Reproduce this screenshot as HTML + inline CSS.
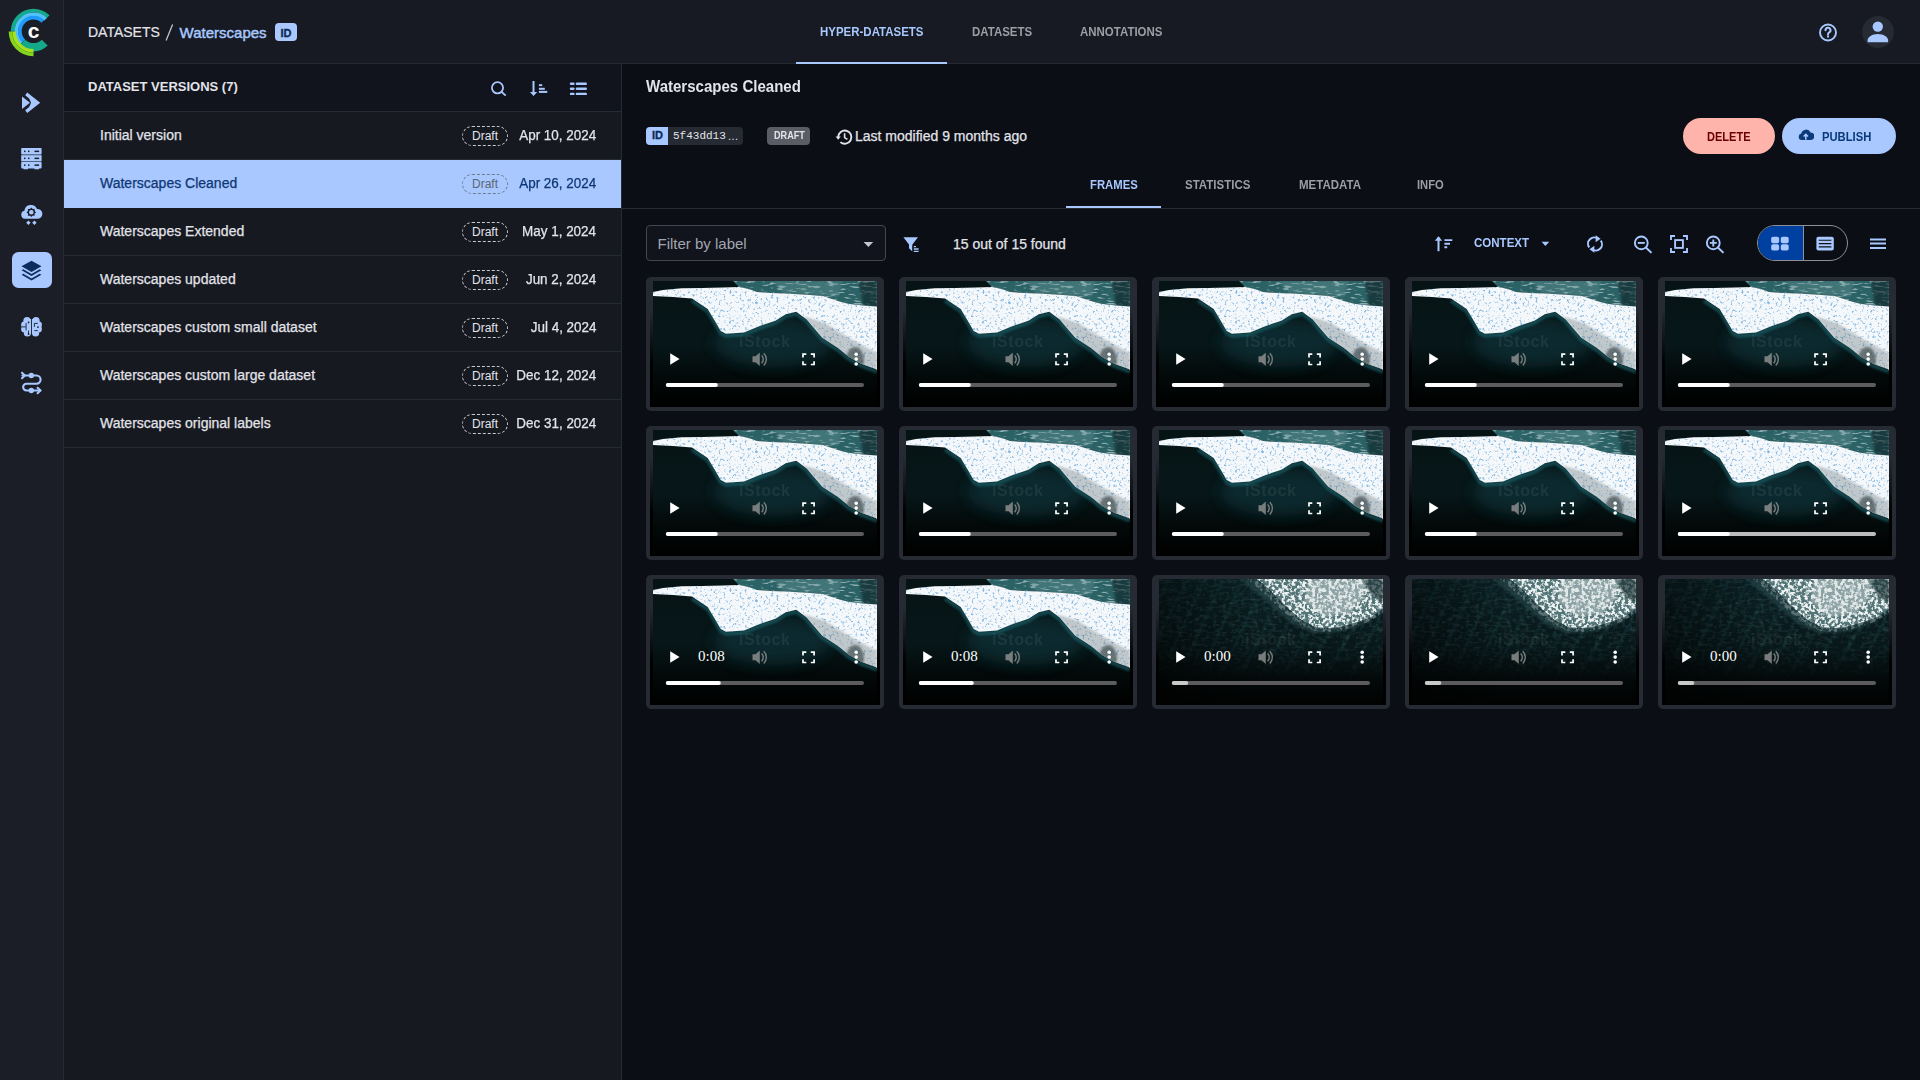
<!DOCTYPE html>
<html><head><meta charset="utf-8">
<style>
*{box-sizing:border-box;margin:0;padding:0}
html,body{width:1920px;height:1080px;overflow:hidden;background:#0b0e15;font-family:"Liberation Sans",sans-serif;color:#e3e3ea}
.a{position:absolute}
.t{position:absolute;white-space:nowrap;transform-origin:0 0;line-height:1}
#side{left:0;top:0;width:64px;height:1080px;background:#1b1e26;border-right:1px solid #262a33}
#hdr{left:64px;top:0;width:1856px;height:64px;background:#171a22;border-bottom:1px solid #262a33}
#panel{left:64px;top:64px;width:558px;height:1016px;background:#161920;border-right:1px solid #262a33}
#phead{left:0;top:0;width:557px;height:48px;background:#11141c;border-bottom:1px solid #262a33}
.row{position:absolute;left:0;width:557px;height:48px;border-bottom:1px solid #262a33}
.row.sel{background:#a8c8ff;border-bottom-color:#a8c8ff}
.rname{position:absolute;left:36px;top:16px;font-size:14px;color:#e3e3ea;white-space:nowrap;line-height:1;-webkit-text-stroke:.25px currentColor}
.sel .rname{color:#0f3674}
.chip{position:absolute;left:398px;top:14px;width:46px;height:20px;border:1px dashed #c9cbd2;border-radius:10px;font-size:12px;line-height:18px;text-align:center;color:#e3e3ea}
.sel .chip{border-color:#6f7a8c;color:#5d6676}
.date{position:absolute;right:25px;top:16px;font-size:14px;line-height:1;color:#e3e3ea;white-space:nowrap;transform:scaleX(.96);transform-origin:100% 0;-webkit-text-stroke:.25px currentColor}
.sel .date{color:#0f3674}
.card{position:absolute;width:238px;height:134px;background:#262a33;border-radius:5px}
.vid{position:absolute;left:4px;top:4px;width:230px;height:126px;background:linear-gradient(#262a33 0%,#262a33 22%,#000 66%);overflow:hidden}
.vid svg.img{position:absolute;left:3px;top:0}
</style></head><body>
<svg width="0" height="0" style="position:absolute">
 <defs>
  <filter id="bl1" x="-20%" y="-20%" width="140%" height="140%"><feGaussianBlur stdDeviation="1.2"/></filter>
  <filter id="bl05" x="-5%" y="-5%" width="110%" height="110%"><feGaussianBlur stdDeviation=".7"/></filter>
  <filter id="bl3" x="-50%" y="-50%" width="200%" height="200%"><feGaussianBlur stdDeviation="7"/></filter>
  <filter id="speck" x="0" y="0" width="100%" height="100%">
    <feTurbulence type="fractalNoise" baseFrequency="0.38" numOctaves="2" seed="7"/>
    <feColorMatrix values="0 0 0 0 0.23  0 0 0 0 0.47  0 0 0 0 0.75  5 0 0 0 -2.85"/>
  </filter>
  <filter id="speckW" x="0" y="0" width="100%" height="100%">
    <feTurbulence type="fractalNoise" baseFrequency="0.12 0.4" numOctaves="2" seed="11"/>
    <feColorMatrix values="0 0 0 0 0.85  0 0 0 0 0.92  0 0 0 0 0.92  6 0 0 0 -3.2"/>
  </filter>
  <filter id="speckW2" x="0" y="0" width="100%" height="100%">
    <feTurbulence type="fractalNoise" baseFrequency="0.3" numOctaves="2" seed="3"/>
    <feColorMatrix values="0 0 0 0 0.84  0 0 0 0 0.89  0 0 0 0 0.89  6 0 0 0 -2.6"/>
  </filter>
  <filter id="speckD" x="0" y="0" width="100%" height="100%">
    <feTurbulence type="fractalNoise" baseFrequency="0.22" numOctaves="3" seed="5"/>
    <feColorMatrix values="0 0 0 0 0.04  0 0 0 0 0.16  0 0 0 0 0.18  6 0 0 0 -3.1"/>
  </filter>
  <linearGradient id="gA" x1="0" y1="0" x2="0" y2="1">
    <stop offset="0" stop-color="#061314"/><stop offset=".5" stop-color="#071719"/><stop offset=".76" stop-color="#030909"/><stop offset="1" stop-color="#000"/>
  </linearGradient>
  <linearGradient id="gFace" x1="0" y1="0" x2="0" y2="1">
    <stop offset="0" stop-color="#1a5a66"/><stop offset=".35" stop-color="#0d3138"/><stop offset=".8" stop-color="#061719"/><stop offset="1" stop-color="#020606"/>
  </linearGradient>
  <linearGradient id="gB" x1="0" y1="0" x2="0" y2="1">
    <stop offset="0" stop-color="#0b2226"/><stop offset=".55" stop-color="#081719"/><stop offset=".82" stop-color="#030808"/><stop offset="1" stop-color="#010202"/>
  </linearGradient>
  <linearGradient id="fadeG" x1="0" y1="0" x2="0" y2="1"><stop offset="0" stop-color="#fff"/><stop offset=".45" stop-color="#fff"/><stop offset=".8" stop-color="#000"/></linearGradient>
  <linearGradient id="fadeL" x1="0" y1="0" x2="1" y2="0"><stop offset="0" stop-color="#000" stop-opacity=".5"/><stop offset=".45" stop-color="#000" stop-opacity="0"/></linearGradient>
  <mask id="fadeM" maskUnits="userSpaceOnUse" x="0" y="0" width="224" height="126"><rect width="224" height="126" fill="url(#fadeG)"/></mask>
  <clipPath id="bandB"><path d="M88 0 H224 V34 L212 42 L198 47 L184 51 L170 53 L156 52 L140 45 L127 35 L112 21 L100 10 Z"/></clipPath>
  <clipPath id="foamClip"><path d="M0 11 L10 9 L28.7 7.2 L50 7 L70 6.5 L86 6 L96 8 L104 11 L118 12 L133 12.4 L153.7 13.7 L170 15 L185 20 L195 22.8 L210 24.5 L224 25.5 L224 89 L222.7 88 L208 82.75 L196 76 L185 67 L169.3 56.7 L160 46 L153.7 38.5 L143.3 30.7 L132.8 33.3 L122.4 39.8 L106.8 45 L91 51.5 L73 52.8 L67.7 50 L62.5 41 L54.7 28 L39 17.6 L20 16 L0 15 Z"/></clipPath>
  <clipPath id="sprayClip"><path d="M80 0 H224 V25.5 L224 25.5 L210 24.5 L195 22.8 L185 20 L170 15 L153.7 13.7 L133 12.4 L118 12 L104 11 L96 8 L86 6 Z"/></clipPath>
  <clipPath id="brightB"><path d="M98 0 H224 V30 L212 38 L198 43 L184 47 L170 49 L156 48 L143 41 L131 31 L118 18 L108 8 Z"/></clipPath>
  <symbol id="imgA" viewBox="0 0 224 126">
    <rect width="224" height="126" fill="url(#gA)"/>
    <ellipse cx="120" cy="62" rx="58" ry="24" fill="#0f3237" opacity=".7" filter="url(#bl3)"/>
    <g clip-path="url(#sprayClip)">
      <rect width="224" height="30" fill="#2b6266"/>
      <rect width="224" height="30" filter="url(#speckW)" opacity=".5"/>
      <path d="M206 0 H224 V28 L210 24 Z" fill="#0c2426" opacity=".6" filter="url(#bl1)"/><path d="M120 0 H190 L185 16 L130 12Z" fill="#6a9a9c" opacity=".35" filter="url(#bl1)"/>
    </g>
    <path d="M224 91 L222.7 90 L208 84.75 L196 78 L185 69 L169.3 58.7 L160 48 L153.7 40.5 L143.3 32.7 L132.8 35.3 L122.4 41.8 L106.8 47 L91 53.5 L73 54.8 L67.7 52 L62.5 43 L54.7 30 L39 19.6" fill="none" stroke="#1f6670" stroke-width="4" opacity=".6" filter="url(#bl1)"/>
    <g clip-path="url(#foamClip)">
      <rect width="224" height="100" fill="#f5f8fa"/>
      <rect width="224" height="100" filter="url(#speck)"/>
      <path d="M150 35 L172 60 L200 82 L224 89 L224 72 L198 58 L172 42Z" fill="#55656b" opacity=".32" filter="url(#bl1)"/>
      <ellipse cx="202" cy="79" rx="9" ry="13" fill="#2e3a3e" opacity=".6" filter="url(#bl1)"/>
    </g>
        <text x="86" y="66" font-family="Liberation Sans" font-weight="700" font-size="16" fill="#8a9a9a" opacity=".13" textLength="51">iStock</text>
  </symbol>
  <symbol id="imgB" viewBox="0 0 224 126">
    <rect width="224" height="126" fill="url(#gB)"/>
    <g mask="url(#fadeM)">
    <g stroke="#1d4a50" stroke-width="2.2" opacity=".4" filter="url(#bl1)">
      <path d="M10 0 L-20 60 M28 0 L-6 70 M46 0 L10 78 M64 0 L26 84 M82 4 L44 90 M98 20 L62 96 M112 36 L80 100 M128 48 L98 104 M150 54 L118 106 M172 50 L138 108 M196 46 L160 110 M220 40 L184 112"/>
    </g>
    <rect width="224" height="100" filter="url(#speckD)" opacity=".2"/>
    <rect width="224" height="100" filter="url(#speckW)" opacity=".06"/>
    </g>
    <path d="M80 0 H224 V32 L203.7 46 L179 53 L154 54 L135 46 L118 32 L98 14 Z" fill="#2f5154" opacity=".5" filter="url(#bl1)"/>
    <g clip-path="url(#bandB)"><rect width="224" height="60" filter="url(#speckW2)" opacity=".3"/></g>
    <g filter="url(#bl05)">
    <g clip-path="url(#brightB)">
      <rect width="224" height="60" fill="#537477"/>
      <rect width="224" height="60" filter="url(#speckW2)"/>
      <path d="M150 0 H208 L204 20 L190 34 L165 38 L145 22 Z" fill="#d5dcdc" opacity=".45" filter="url(#bl1)"/>
      <path d="M204 0 H224 V24 L212 16Z" fill="#1c3234" opacity=".7" filter="url(#bl1)"/>
    </g>
    </g>
    <rect width="224" height="126" fill="url(#fadeL)"/>
    <text x="86" y="66" font-family="Liberation Sans" font-weight="700" font-size="16" fill="#8a9a9a" opacity=".1" textLength="51">iStock</text>
  </symbol>
 </defs>
</svg>

<!-- sidebar -->
<div id="side" class="a">
  <svg class="a" style="left:0;top:0" width="64" height="64" viewBox="0 0 64 64">
    <path d="M22.26 42.64A15.9 15.9 0 0 0 44.74 42.64" fill="none" stroke="#15a98b" stroke-width="8.4"/>
    <path d="M48.21 16.69A20.8 20.8 0 0 0 12.70 31.40" fill="none" stroke="#15a98b" stroke-width="3.8"/>
    <path d="M45.66 19.24A17.2 17.2 0 0 0 21.13 43.35" fill="none" stroke="#52c2f8" stroke-width="3.8"/>
    <path d="M42.78 21.45A13.6 13.6 0 0 0 23.72 40.85" fill="none" stroke="#1f9bfb" stroke-width="3.8"/>
    <path d="M14.00 31.40A19.5 19.5 0 0 0 33.50 50.90" fill="none" stroke="#a6e01e" stroke-width="3.6"/>
    <path d="M10.50 31.40A23.0 23.0 0 0 0 33.50 54.40" fill="none" stroke="#84d61c" stroke-width="3.6"/>
    <text x="33.6" y="38" text-anchor="middle" font-family="Liberation Sans" font-weight="700" font-size="21" fill="#fff">c</text>
  </svg>
  <svg class="a" style="left:0;top:80px" width="64" height="330" viewBox="0 80 64 330">
    <g fill="#a8c8ff">
      <path d="M22 96.5 L30 102.8 L22 109 Z"/>
      <path d="M27.2 92.5 L40.2 102.8 L27.2 113 L25.2 110.2 L34.4 102.8 L25.2 95.3 Z"/>
      <path d="M28 95.5 L36 102.8 L28 110 L31 102.8 Z"/>
    </g>
    <g>
      <rect x="21.2" y="148" width="20.4" height="6.6" rx="0.8" fill="#a8c8ff"/>
      <rect x="21.2" y="155.2" width="20.4" height="6.2" fill="#a8c8ff"/>
      <rect x="21.2" y="162" width="20.4" height="6.4" rx="0.8" fill="#a8c8ff"/>
      <rect x="23.5" y="168" width="4.5" height="1.3" fill="#a8c8ff"/>
      <rect x="34.5" y="168" width="4.5" height="1.3" fill="#a8c8ff"/>
      <g fill="#1b1e26">
        <rect x="24" y="150.6" width="1.5" height="1.5"/><rect x="28" y="150.6" width="1.5" height="1.5"/><rect x="34.5" y="150.6" width="4.6" height="1.5"/>
        <rect x="24" y="157.6" width="1.5" height="1.5"/><rect x="28" y="157.6" width="1.5" height="1.5"/><rect x="34.5" y="157.6" width="4.6" height="1.5"/>
        <rect x="24" y="164.4" width="1.5" height="1.5"/><rect x="28" y="164.4" width="1.5" height="1.5"/><rect x="34.5" y="164.4" width="4.6" height="1.5"/>
      </g>
    </g>
    <g>
      <path d="M25 218.7 a4 4 0 0 1 -0.6 -7.9 a6.6 6.6 0 0 1 12.6 -1.8 a4.6 4.6 0 0 1 1 9.7 Z" fill="#a8c8ff"/>
      <circle cx="31.3" cy="212.3" r="3" fill="none" stroke="#1b1e26" stroke-width="1.4"/>
      <path d="M31.3 207.8v1.6M31.3 215.2v1.6M26.8 212.3h1.6M34.2 212.3h1.6M28.1 209.1l1.1 1.1M33.4 214.4l1.1 1.1M28.1 215.5l1.1-1.1M33.4 210.2l1.1-1.1" stroke="#1b1e26" stroke-width="1.2"/>
      <path d="M26.2 222.8 l2.2-2.2 l2.2 2.2 l-2.2 2.2z M32.2 222.8 l2.2-2.2 l2.2 2.2 l-2.2 2.2z" fill="#a8c8ff"/>
    </g>
    <rect x="12" y="252" width="40" height="36" rx="6.5" fill="#a8c8ff"/>
    <g fill="#0a2d5c">
      <path d="M31.5 260.7 L41.5 266.3 L31.5 271.9 L21.5 266.3 Z"/>
      <path d="M23.3 269.3 L21.6 270.3 L31.5 276.1 L41.4 270.3 L39.7 269.3 L31.5 273.9 Z"/>
      <path d="M23.3 273.7 L21.6 274.7 L31.5 280.6 L41.4 274.7 L39.7 273.7 L31.5 278.4 Z"/>
    </g>
    <g>
      <g fill="#a8c8ff">
        <circle cx="27" cy="320.6" r="3.6"/><circle cx="36" cy="320.6" r="3.6"/>
        <circle cx="24.6" cy="324.8" r="3.5"/><circle cx="38.4" cy="324.8" r="3.5"/>
        <circle cx="24.6" cy="329" r="3.5"/><circle cx="38.4" cy="329" r="3.5"/>
        <circle cx="27.4" cy="333" r="3.6"/><circle cx="35.6" cy="333" r="3.6"/>
        <rect x="26" y="319" width="11" height="15"/>
      </g>
      <path d="M31.5 317.5v19 M21.5 326.9h4.2 M26.1 323v7.4 M37.8 323.4h-3.4v3.4 M34.4 330.6h3.4 M28.5 330.6v3" fill="none" stroke="#1b1e26" stroke-width=".9"/>
      <g fill="#1b1e26"><circle cx="28.6" cy="322.4" r=".9"/><circle cx="38" cy="327.1" r=".9"/><circle cx="28.6" cy="334" r=".9"/></g>
    </g>
    <g fill="none" stroke="#a8c8ff" stroke-width="2.1" stroke-linecap="round">
      <path d="M22.5 375.5 H36.5 a4.1 4.1 0 0 1 0 8.2 H26.5 a3.4 3.4 0 0 0 0 6.8 H40.2"/>
      <path d="M22 372.8 l2.8 2.7 l-2.8 2.7 M37.6 387.8 l2.8 2.7 l-2.8 2.7"/>
    </g>
    <g fill="#a8c8ff"><circle cx="31.3" cy="375.5" r="2.7"/><circle cx="31.3" cy="390.5" r="2.7"/></g>
  </svg>
</div>

<!-- header -->
<div id="hdr" class="a">
  <div class="t" style="left:24px;top:25.4px;font-size:14px;color:#e3e3ea;-webkit-text-stroke:.2px #e3e3ea">DATASETS</div>
  <svg class="a" style="left:100px;top:20px" width="14" height="24" viewBox="164 20 14 24"><path d="M172.6 24.6L166.1 40.4" stroke="#c4c6cf" stroke-width="1.25"/></svg>
  <div class="t" style="left:115.6px;top:24.5px;font-size:15px;color:#a8c8ff;-webkit-text-stroke:.45px #a8c8ff">Waterscapes</div>
  <div class="a" style="left:211px;top:23px;width:22px;height:18px;background:#a8c8ff;border-radius:4px"></div>
  <div class="t" style="left:216.5px;top:27.5px;font-size:11px;font-weight:700;color:#0b2a55;-webkit-text-stroke:.3px #0b2a55">ID</div>
  <div class="t" style="left:756px;top:24.8px;font-size:13.5px;font-weight:700;color:#a8c8ff;transform:scaleX(.85)">HYPER-DATASETS</div>
  <div class="t" style="left:907.7px;top:24.8px;font-size:13.5px;font-weight:700;color:#9c9ea6;transform:scaleX(.85)">DATASETS</div>
  <div class="t" style="left:1016.2px;top:24.8px;font-size:13.5px;font-weight:700;color:#9c9ea6;transform:scaleX(.85)">ANNOTATIONS</div>
  <div class="a" style="left:732px;top:62px;width:151px;height:2px;background:#a8c8ff"></div>
  <svg class="a" style="left:1754px;top:22px" width="21" height="21" viewBox="0 0 21 21">
    <circle cx="10" cy="10.5" r="8" fill="none" stroke="#a8c8ff" stroke-width="1.9"/>
    <path d="M7.5 8.3a2.5 2.5 0 1 1 3.7 2.1c-.7.4-1.2.9-1.2 1.8v.4" fill="none" stroke="#a8c8ff" stroke-width="2" stroke-linecap="round"/>
    <rect x="9" y="13.5" width="2" height="2" fill="#a8c8ff"/>
  </svg>
  <div class="a" style="left:1798px;top:16px;width:32px;height:32px;border-radius:50%;background:#262a33"></div>
  <svg class="a" style="left:1798px;top:16px" width="32" height="32" viewBox="0 0 32 32">
    <circle cx="15.8" cy="10.6" r="5.2" fill="#a8c8ff"/>
    <path d="M5.6 26.3v-2.2c0-3.2 4.6-6.2 10.2-6.2s10.3 3 10.3 6.2v2.2z" fill="#a8c8ff"/>
  </svg>
</div>

<!-- left panel -->
<div id="panel" class="a">
  <div id="phead" class="a">
    <div class="t" style="left:24px;top:16.2px;font-size:13px;font-weight:700;color:#e3e3ea">DATASET VERSIONS (7)</div>
    <svg class="a" style="left:422px;top:12px" width="130" height="24" viewBox="486 76 130 24">
      <circle cx="497.5" cy="87.8" r="5.6" fill="none" stroke="#a8c8ff" stroke-width="1.8"/>
      <path d="M501.6 91.9l4.1 3.7" stroke="#a8c8ff" stroke-width="1.9"/>
      <path d="M533.5 81v11" stroke="#a8c8ff" stroke-width="2"/>
      <path d="M529.9 92.1h7.3l-3.65 4z" fill="#a8c8ff"/>
      <rect x="538.9" y="84.2" width="3.3" height="1.9" fill="#a8c8ff"/>
      <rect x="538.9" y="87.8" width="5.9" height="2" fill="#a8c8ff"/>
      <rect x="538.9" y="90.9" width="8.4" height="2" fill="#a8c8ff"/>
      <g fill="#a8c8ff"><rect x="569.8" y="82.6" width="4.8" height="2.4" rx="1.2"/><rect x="575.7" y="82.6" width="11.3" height="2.4" rx="1.2"/><rect x="569.8" y="87.6" width="4.8" height="2.4" rx="1.2"/><rect x="575.7" y="87.6" width="11.3" height="2.4" rx="1.2"/><rect x="569.8" y="92.7" width="4.8" height="2.4" rx="1.2"/><rect x="575.7" y="92.7" width="11.3" height="2.4" rx="1.2"/></g>
    </svg>
  </div>
  <div class="row" style="top:48px"><div class="rname">Initial version</div><div class="chip">Draft</div><div class="date">Apr 10, 2024</div></div>
  <div class="row sel" style="top:96px"><div class="rname">Waterscapes Cleaned</div><div class="chip">Draft</div><div class="date">Apr 26, 2024</div></div>
  <div class="row" style="top:144px"><div class="rname">Waterscapes Extended</div><div class="chip">Draft</div><div class="date">May 1, 2024</div></div>
  <div class="row" style="top:192px"><div class="rname">Waterscapes updated</div><div class="chip">Draft</div><div class="date">Jun 2, 2024</div></div>
  <div class="row" style="top:240px"><div class="rname">Waterscapes custom small dataset</div><div class="chip">Draft</div><div class="date">Jul 4, 2024</div></div>
  <div class="row" style="top:288px"><div class="rname">Waterscapes custom large dataset</div><div class="chip">Draft</div><div class="date">Dec 12, 2024</div></div>
  <div class="row" style="top:336px"><div class="rname">Waterscapes original labels</div><div class="chip">Draft</div><div class="date">Dec 31, 2024</div></div>
</div>

<!-- main -->
<div id="main" class="a" style="left:0;top:0;width:1920px;height:1080px">
  <div class="t" style="left:646px;top:79.3px;font-size:16px;font-weight:700;color:#e3e3ea;transform:scaleX(.94)">Waterscapes Cleaned</div>
  <!-- id chip -->
  <div class="a" style="left:646px;top:127px;width:97px;height:18px;background:#262a33;border-radius:4px;overflow:hidden"><div class="a" style="left:0;top:0;width:22px;height:18px;background:#a8c8ff"></div></div>
  <div class="t" style="left:652px;top:130.4px;font-size:11px;font-weight:700;color:#0b2a55;-webkit-text-stroke:.3px #0b2a55">ID</div>
  <div class="t" style="left:673px;top:131.4px;font-size:11px;font-family:'Liberation Mono',monospace;color:#e3e3ea">5f43dd13</div>
  <div class="t" style="left:727.5px;top:130.5px;font-size:11px;color:#e3e3ea">&hellip;</div>
  <!-- draft chip -->
  <div class="a" style="left:767px;top:127px;width:43px;height:18px;background:#5a5d66;border-radius:4px"></div>
  <div class="t" style="left:773.5px;top:129.7px;font-size:11px;font-weight:700;color:#e3e3ea;transform:scaleX(.83)">DRAFT</div>
  <!-- history -->
  <svg class="a" style="left:834px;top:128px" width="20" height="18" viewBox="0 0 20 18">
    <path d="M4.2 9.2 A6.6 6.6 0 1 1 6.4 14.1" fill="none" stroke="#e3e3ea" stroke-width="1.9"/>
    <path d="M1.6 8.6 h5.2 l-2.6 3.2z" fill="#e3e3ea"/>
    <path d="M10.6 5.2 v4.4 l2.8 1.8" fill="none" stroke="#e3e3ea" stroke-width="1.6"/>
  </svg>
  <div class="t" style="left:855px;top:128.95px;font-size:14px;color:#e3e3ea;-webkit-text-stroke:.25px #e3e3ea">Last modified 9 months ago</div>
  <!-- buttons -->
  <div class="a" style="left:1683px;top:118px;width:92px;height:36px;background:#ffb4ab;border-radius:18px"></div>
  <div class="t" style="left:1707px;top:129.6px;font-size:13px;font-weight:700;color:#690005;transform:scaleX(.85)">DELETE</div>
  <div class="a" style="left:1782px;top:118px;width:114px;height:36px;background:#a8c8ff;border-radius:18px"></div>
  <svg class="a" style="left:1798px;top:129px" width="16" height="12" viewBox="0 0 16 12">
    <path d="M3.6 11 a3.3 3.3 0 0 1 -0.3 -6.5 a4.9 4.9 0 0 1 9.2 -1.1 a3.8 3.8 0 0 1 0 7.6 Z" fill="#0a3a7a"/>
    <path d="M7.8 10.8 v-4.2 M5.6 7.6 l2.2 -2.3 l2.2 2.3" fill="none" stroke="#a8c8ff" stroke-width="1.5"/>
  </svg>
  <div class="t" style="left:1821.5px;top:129.6px;font-size:13px;font-weight:700;color:#0a3a7a;transform:scaleX(.865)">PUBLISH</div>
  <!-- tabs -->
  <div class="t" style="left:1090px;top:178.2px;font-size:13.5px;font-weight:700;color:#a8c8ff;transform:scaleX(0.838)">FRAMES</div>
  <div class="t" style="left:1185.4px;top:178.2px;font-size:13.5px;font-weight:700;color:#9c9ea6;transform:scaleX(0.852)">STATISTICS</div>
  <div class="t" style="left:1299px;top:178.2px;font-size:13.5px;font-weight:700;color:#9c9ea6;transform:scaleX(0.852)">METADATA</div>
  <div class="t" style="left:1416.7px;top:178.2px;font-size:13.5px;font-weight:700;color:#9c9ea6;transform:scaleX(0.828)">INFO</div>
  <div class="a" style="left:622px;top:208px;width:1298px;height:1px;background:#262a33"></div>
  <div class="a" style="left:1066px;top:206px;width:95px;height:2px;background:#a8c8ff"></div>
  <!-- toolbar -->
  <div class="a" style="left:646px;top:225px;width:240px;height:36px;background:#11141c;border:1px solid #44474f;border-radius:4px"></div>
  <div class="t" style="left:657.5px;top:235.8px;font-size:15px;color:#a3a6ae">Filter by label</div>
  <svg class="a" style="left:862px;top:241px" width="13" height="7" viewBox="0 0 13 7"><path d="M1.6 .9h9.6l-4.8 5z" fill="#c4c6cf"/></svg>
  <svg class="a" style="left:902px;top:236px" width="19" height="17" viewBox="0 0 19 17">
    <path d="M1.4 1.2h14.6l-5.6 7.2v7.2l-3.4-3.4v-3.8z" fill="#a8c8ff"/>
    <path d="M11.6 10.6h2.4M11.6 13h5M11.6 15.4h5" stroke="#a8c8ff" stroke-width="1.3"/>
    <path d="M10.5 9.4h1v7h-1z" fill="#0c0f16"/>
  </svg>
  <div class="t" style="left:953px;top:236.95px;font-size:14px;color:#e3e3ea;-webkit-text-stroke:.25px #e3e3ea">15 out of 15 found</div>
  <svg class="a" style="left:1432px;top:234px" width="24" height="20" viewBox="0 0 24 20">
    <path d="M6.5 17.2V3.4" stroke="#a8c8ff" stroke-width="2"/>
    <path d="M2.8 6.8 L6.5 2.2 L10.2 6.8z" fill="#a8c8ff"/>
    <path d="M12.4 6.1h7.9M12.4 9.7h5.6M12.4 13.2h2.8" stroke="#a8c8ff" stroke-width="1.9"/>
  </svg>
  <div class="t" style="left:1473.7px;top:236.8px;font-size:12px;font-weight:700;color:#a8c8ff;transform:scaleX(.96)">CONTEXT</div>
  <svg class="a" style="left:1540px;top:241px" width="11" height="6" viewBox="0 0 11 6"><path d="M1.6 .7h7.6l-3.8 4.3z" fill="#a8c8ff"/></svg>
  <svg class="a" style="left:1585px;top:233px" width="20" height="22" viewBox="0 0 20 22">
    <path d="M4.2 14.4 A6.2 6.2 0 0 1 13.2 6" fill="none" stroke="#a8c8ff" stroke-width="2"/>
    <path d="M15.8 7.6 A6.2 6.2 0 0 1 6.8 16" fill="none" stroke="#a8c8ff" stroke-width="2"/>
    <path d="M10.6 2.2 L15.6 5.8 L10.6 9.2z" fill="#a8c8ff"/>
    <path d="M9.4 12.8 L4.4 16.2 L9.4 19.8z" fill="#a8c8ff"/>
  </svg>
  <svg class="a" style="left:1632px;top:234px" width="22" height="20" viewBox="0 0 22 20">
    <circle cx="9.3" cy="8.9" r="6.4" fill="none" stroke="#a8c8ff" stroke-width="1.9"/>
    <path d="M13.9 13.5l5.6 5.4" stroke="#a8c8ff" stroke-width="2"/>
    <path d="M5.8 8.9h7" stroke="#a8c8ff" stroke-width="1.9"/>
  </svg>
  <svg class="a" style="left:1669px;top:234px" width="20" height="20" viewBox="0 0 20 20">
    <path d="M2 6V2h4M14 2h4v4M18 14v4h-4M6 18H2v-4" fill="none" stroke="#a8c8ff" stroke-width="1.9"/>
    <rect x="6.1" y="6.1" width="7.8" height="7.8" fill="none" stroke="#a8c8ff" stroke-width="1.9"/>
  </svg>
  <svg class="a" style="left:1704px;top:234px" width="22" height="20" viewBox="0 0 22 20">
    <circle cx="9.3" cy="8.9" r="6.4" fill="none" stroke="#a8c8ff" stroke-width="1.9"/>
    <path d="M13.9 13.5l5.6 5.4" stroke="#a8c8ff" stroke-width="2"/>
    <path d="M5.8 8.9h7M9.3 5.4v7" stroke="#a8c8ff" stroke-width="1.9"/>
  </svg>
  <div class="a" style="left:1757px;top:225px;width:91px;height:36px;border:1px solid #8e9099;border-radius:18px;overflow:hidden">
    <div class="a" style="left:0;top:0;width:45px;height:34px;background:#0040a0"></div>
    <div class="a" style="left:45px;top:0;width:1px;height:34px;background:#8e9099"></div>
  </div>
  <svg class="a" style="left:1770px;top:236px" width="20" height="16" viewBox="0 0 20 16">
    <rect x="1.2" y=".8" width="7.9" height="6.4" rx="1.8" fill="#a8c8ff"/><rect x="10.8" y=".8" width="7.9" height="6.4" rx="1.8" fill="#a8c8ff"/>
    <rect x="1.2" y="8.2" width="7.9" height="6.4" rx="1.8" fill="#a8c8ff"/><rect x="10.8" y="8.2" width="7.9" height="6.4" rx="1.8" fill="#a8c8ff"/>
  </svg>
  <svg class="a" style="left:1815px;top:236px" width="20" height="16" viewBox="0 0 20 16">
    <rect x="1.4" y=".8" width="17.4" height="13.8" rx="2" fill="#a8c8ff"/>
    <path d="M3.8 4.3h12.6M3.8 7.6h12.6M3.8 10.9h12.6" stroke="#0c0f16" stroke-width="1.1"/>
  </svg>
  <svg class="a" style="left:1868px;top:236px" width="20" height="14" viewBox="0 0 20 14">
    <path d="M2 3.4h16M2 7.6h16M2 11.9h16" stroke="#a8c8ff" stroke-width="2"/>
  </svg>
<div class="card" style="left:646px;top:277px"><div class="vid"><svg class="img" width="224" height="126"><use href="#imgA"/></svg></div>
  <svg class="a" style="left:0;top:0" width="238" height="134" viewBox="0 0 238 134">
    <path d="M24.2 76.2 L33.6 82 L24.2 87.8Z" fill="#fff"/>
    <path d="M106.5 79.3h3l4.3-3.8v13.6l-4.3-3.8h-3z" fill="#8d8d8d" opacity=".85"/>
    <path d="M115.6 78.4a5.4 5.4 0 0 1 0 7.8M117.8 76.2a8.6 8.6 0 0 1 0 12.2" fill="none" stroke="#8d8d8d" stroke-width="1.4" opacity=".85"/>
    <path d="M157 80.4v-3.3h3.3M164.8 77.1h3.3v3.3M168.1 84.2v3.3h-3.3M160.3 87.5h-3.3v-3.3" fill="none" stroke="#fff" stroke-width="1.7"/>
    <circle cx="210.2" cy="77.2" r="1.8" fill="#fff"/><circle cx="210.2" cy="82.1" r="1.8" fill="#fff"/><circle cx="210.2" cy="87" r="1.8" fill="#fff"/>
    <rect x="19.8" y="106" width="198.2" height="4" rx="2" fill="#5c5c5c"/>
    <rect x="19.8" y="106" width="52" height="4" rx="2" fill="#fff"/>
  </svg></div>
<div class="card" style="left:899px;top:277px"><div class="vid"><svg class="img" width="224" height="126"><use href="#imgA"/></svg></div>
  <svg class="a" style="left:0;top:0" width="238" height="134" viewBox="0 0 238 134">
    <path d="M24.2 76.2 L33.6 82 L24.2 87.8Z" fill="#fff"/>
    <path d="M106.5 79.3h3l4.3-3.8v13.6l-4.3-3.8h-3z" fill="#8d8d8d" opacity=".85"/>
    <path d="M115.6 78.4a5.4 5.4 0 0 1 0 7.8M117.8 76.2a8.6 8.6 0 0 1 0 12.2" fill="none" stroke="#8d8d8d" stroke-width="1.4" opacity=".85"/>
    <path d="M157 80.4v-3.3h3.3M164.8 77.1h3.3v3.3M168.1 84.2v3.3h-3.3M160.3 87.5h-3.3v-3.3" fill="none" stroke="#fff" stroke-width="1.7"/>
    <circle cx="210.2" cy="77.2" r="1.8" fill="#fff"/><circle cx="210.2" cy="82.1" r="1.8" fill="#fff"/><circle cx="210.2" cy="87" r="1.8" fill="#fff"/>
    <rect x="19.8" y="106" width="198.2" height="4" rx="2" fill="#5c5c5c"/>
    <rect x="19.8" y="106" width="52" height="4" rx="2" fill="#fff"/>
  </svg></div>
<div class="card" style="left:1152px;top:277px"><div class="vid"><svg class="img" width="224" height="126"><use href="#imgA"/></svg></div>
  <svg class="a" style="left:0;top:0" width="238" height="134" viewBox="0 0 238 134">
    <path d="M24.2 76.2 L33.6 82 L24.2 87.8Z" fill="#fff"/>
    <path d="M106.5 79.3h3l4.3-3.8v13.6l-4.3-3.8h-3z" fill="#8d8d8d" opacity=".85"/>
    <path d="M115.6 78.4a5.4 5.4 0 0 1 0 7.8M117.8 76.2a8.6 8.6 0 0 1 0 12.2" fill="none" stroke="#8d8d8d" stroke-width="1.4" opacity=".85"/>
    <path d="M157 80.4v-3.3h3.3M164.8 77.1h3.3v3.3M168.1 84.2v3.3h-3.3M160.3 87.5h-3.3v-3.3" fill="none" stroke="#fff" stroke-width="1.7"/>
    <circle cx="210.2" cy="77.2" r="1.8" fill="#fff"/><circle cx="210.2" cy="82.1" r="1.8" fill="#fff"/><circle cx="210.2" cy="87" r="1.8" fill="#fff"/>
    <rect x="19.8" y="106" width="198.2" height="4" rx="2" fill="#5c5c5c"/>
    <rect x="19.8" y="106" width="52" height="4" rx="2" fill="#fff"/>
  </svg></div>
<div class="card" style="left:1405px;top:277px"><div class="vid"><svg class="img" width="224" height="126"><use href="#imgA"/></svg></div>
  <svg class="a" style="left:0;top:0" width="238" height="134" viewBox="0 0 238 134">
    <path d="M24.2 76.2 L33.6 82 L24.2 87.8Z" fill="#fff"/>
    <path d="M106.5 79.3h3l4.3-3.8v13.6l-4.3-3.8h-3z" fill="#8d8d8d" opacity=".85"/>
    <path d="M115.6 78.4a5.4 5.4 0 0 1 0 7.8M117.8 76.2a8.6 8.6 0 0 1 0 12.2" fill="none" stroke="#8d8d8d" stroke-width="1.4" opacity=".85"/>
    <path d="M157 80.4v-3.3h3.3M164.8 77.1h3.3v3.3M168.1 84.2v3.3h-3.3M160.3 87.5h-3.3v-3.3" fill="none" stroke="#fff" stroke-width="1.7"/>
    <circle cx="210.2" cy="77.2" r="1.8" fill="#fff"/><circle cx="210.2" cy="82.1" r="1.8" fill="#fff"/><circle cx="210.2" cy="87" r="1.8" fill="#fff"/>
    <rect x="19.8" y="106" width="198.2" height="4" rx="2" fill="#5c5c5c"/>
    <rect x="19.8" y="106" width="52" height="4" rx="2" fill="#fff"/>
  </svg></div>
<div class="card" style="left:1658px;top:277px"><div class="vid"><svg class="img" width="224" height="126"><use href="#imgA"/></svg></div>
  <svg class="a" style="left:0;top:0" width="238" height="134" viewBox="0 0 238 134">
    <path d="M24.2 76.2 L33.6 82 L24.2 87.8Z" fill="#fff"/>
    <path d="M106.5 79.3h3l4.3-3.8v13.6l-4.3-3.8h-3z" fill="#8d8d8d" opacity=".85"/>
    <path d="M115.6 78.4a5.4 5.4 0 0 1 0 7.8M117.8 76.2a8.6 8.6 0 0 1 0 12.2" fill="none" stroke="#8d8d8d" stroke-width="1.4" opacity=".85"/>
    <path d="M157 80.4v-3.3h3.3M164.8 77.1h3.3v3.3M168.1 84.2v3.3h-3.3M160.3 87.5h-3.3v-3.3" fill="none" stroke="#fff" stroke-width="1.7"/>
    <circle cx="210.2" cy="77.2" r="1.8" fill="#fff"/><circle cx="210.2" cy="82.1" r="1.8" fill="#fff"/><circle cx="210.2" cy="87" r="1.8" fill="#fff"/>
    <rect x="19.8" y="106" width="198.2" height="4" rx="2" fill="#5c5c5c"/>
    <rect x="19.8" y="106" width="52" height="4" rx="2" fill="#fff"/>
  </svg></div>
<div class="card" style="left:646px;top:426px"><div class="vid"><svg class="img" width="224" height="126"><use href="#imgA"/></svg></div>
  <svg class="a" style="left:0;top:0" width="238" height="134" viewBox="0 0 238 134">
    <path d="M24.2 76.2 L33.6 82 L24.2 87.8Z" fill="#fff"/>
    <path d="M106.5 79.3h3l4.3-3.8v13.6l-4.3-3.8h-3z" fill="#8d8d8d" opacity=".85"/>
    <path d="M115.6 78.4a5.4 5.4 0 0 1 0 7.8M117.8 76.2a8.6 8.6 0 0 1 0 12.2" fill="none" stroke="#8d8d8d" stroke-width="1.4" opacity=".85"/>
    <path d="M157 80.4v-3.3h3.3M164.8 77.1h3.3v3.3M168.1 84.2v3.3h-3.3M160.3 87.5h-3.3v-3.3" fill="none" stroke="#fff" stroke-width="1.7"/>
    <circle cx="210.2" cy="77.2" r="1.8" fill="#fff"/><circle cx="210.2" cy="82.1" r="1.8" fill="#fff"/><circle cx="210.2" cy="87" r="1.8" fill="#fff"/>
    <rect x="19.8" y="106" width="198.2" height="4" rx="2" fill="#5c5c5c"/>
    <rect x="19.8" y="106" width="52" height="4" rx="2" fill="#fff"/>
  </svg></div>
<div class="card" style="left:899px;top:426px"><div class="vid"><svg class="img" width="224" height="126"><use href="#imgA"/></svg></div>
  <svg class="a" style="left:0;top:0" width="238" height="134" viewBox="0 0 238 134">
    <path d="M24.2 76.2 L33.6 82 L24.2 87.8Z" fill="#fff"/>
    <path d="M106.5 79.3h3l4.3-3.8v13.6l-4.3-3.8h-3z" fill="#8d8d8d" opacity=".85"/>
    <path d="M115.6 78.4a5.4 5.4 0 0 1 0 7.8M117.8 76.2a8.6 8.6 0 0 1 0 12.2" fill="none" stroke="#8d8d8d" stroke-width="1.4" opacity=".85"/>
    <path d="M157 80.4v-3.3h3.3M164.8 77.1h3.3v3.3M168.1 84.2v3.3h-3.3M160.3 87.5h-3.3v-3.3" fill="none" stroke="#fff" stroke-width="1.7"/>
    <circle cx="210.2" cy="77.2" r="1.8" fill="#fff"/><circle cx="210.2" cy="82.1" r="1.8" fill="#fff"/><circle cx="210.2" cy="87" r="1.8" fill="#fff"/>
    <rect x="19.8" y="106" width="198.2" height="4" rx="2" fill="#5c5c5c"/>
    <rect x="19.8" y="106" width="52" height="4" rx="2" fill="#fff"/>
  </svg></div>
<div class="card" style="left:1152px;top:426px"><div class="vid"><svg class="img" width="224" height="126"><use href="#imgA"/></svg></div>
  <svg class="a" style="left:0;top:0" width="238" height="134" viewBox="0 0 238 134">
    <path d="M24.2 76.2 L33.6 82 L24.2 87.8Z" fill="#fff"/>
    <path d="M106.5 79.3h3l4.3-3.8v13.6l-4.3-3.8h-3z" fill="#8d8d8d" opacity=".85"/>
    <path d="M115.6 78.4a5.4 5.4 0 0 1 0 7.8M117.8 76.2a8.6 8.6 0 0 1 0 12.2" fill="none" stroke="#8d8d8d" stroke-width="1.4" opacity=".85"/>
    <path d="M157 80.4v-3.3h3.3M164.8 77.1h3.3v3.3M168.1 84.2v3.3h-3.3M160.3 87.5h-3.3v-3.3" fill="none" stroke="#fff" stroke-width="1.7"/>
    <circle cx="210.2" cy="77.2" r="1.8" fill="#fff"/><circle cx="210.2" cy="82.1" r="1.8" fill="#fff"/><circle cx="210.2" cy="87" r="1.8" fill="#fff"/>
    <rect x="19.8" y="106" width="198.2" height="4" rx="2" fill="#5c5c5c"/>
    <rect x="19.8" y="106" width="52" height="4" rx="2" fill="#fff"/>
  </svg></div>
<div class="card" style="left:1405px;top:426px"><div class="vid"><svg class="img" width="224" height="126"><use href="#imgA"/></svg></div>
  <svg class="a" style="left:0;top:0" width="238" height="134" viewBox="0 0 238 134">
    <path d="M24.2 76.2 L33.6 82 L24.2 87.8Z" fill="#fff"/>
    <path d="M106.5 79.3h3l4.3-3.8v13.6l-4.3-3.8h-3z" fill="#8d8d8d" opacity=".85"/>
    <path d="M115.6 78.4a5.4 5.4 0 0 1 0 7.8M117.8 76.2a8.6 8.6 0 0 1 0 12.2" fill="none" stroke="#8d8d8d" stroke-width="1.4" opacity=".85"/>
    <path d="M157 80.4v-3.3h3.3M164.8 77.1h3.3v3.3M168.1 84.2v3.3h-3.3M160.3 87.5h-3.3v-3.3" fill="none" stroke="#fff" stroke-width="1.7"/>
    <circle cx="210.2" cy="77.2" r="1.8" fill="#fff"/><circle cx="210.2" cy="82.1" r="1.8" fill="#fff"/><circle cx="210.2" cy="87" r="1.8" fill="#fff"/>
    <rect x="19.8" y="106" width="198.2" height="4" rx="2" fill="#5c5c5c"/>
    <rect x="19.8" y="106" width="52" height="4" rx="2" fill="#fff"/>
  </svg></div>
<div class="card" style="left:1658px;top:426px"><div class="vid"><svg class="img" width="224" height="126"><use href="#imgA"/></svg></div>
  <svg class="a" style="left:0;top:0" width="238" height="134" viewBox="0 0 238 134">
    <path d="M24.2 76.2 L33.6 82 L24.2 87.8Z" fill="#fff"/>
    <path d="M106.5 79.3h3l4.3-3.8v13.6l-4.3-3.8h-3z" fill="#8d8d8d" opacity=".85"/>
    <path d="M115.6 78.4a5.4 5.4 0 0 1 0 7.8M117.8 76.2a8.6 8.6 0 0 1 0 12.2" fill="none" stroke="#8d8d8d" stroke-width="1.4" opacity=".85"/>
    <path d="M157 80.4v-3.3h3.3M164.8 77.1h3.3v3.3M168.1 84.2v3.3h-3.3M160.3 87.5h-3.3v-3.3" fill="none" stroke="#fff" stroke-width="1.7"/>
    <circle cx="210.2" cy="77.2" r="1.8" fill="#fff"/><circle cx="210.2" cy="82.1" r="1.8" fill="#fff"/><circle cx="210.2" cy="87" r="1.8" fill="#fff"/>
    <rect x="19.8" y="106" width="198.2" height="4" rx="2" fill="#bdbdbd"/>
    <rect x="19.8" y="106" width="52" height="4" rx="2" fill="#fff"/>
  </svg></div>
<div class="card" style="left:646px;top:575px"><div class="vid"><svg class="img" width="224" height="126"><use href="#imgA"/></svg></div>
  <svg class="a" style="left:0;top:0" width="238" height="134" viewBox="0 0 238 134">
    <path d="M24.2 76.2 L33.6 82 L24.2 87.8Z" fill="#fff"/>
    <path d="M106.5 79.3h3l4.3-3.8v13.6l-4.3-3.8h-3z" fill="#8d8d8d" opacity=".85"/>
    <path d="M115.6 78.4a5.4 5.4 0 0 1 0 7.8M117.8 76.2a8.6 8.6 0 0 1 0 12.2" fill="none" stroke="#8d8d8d" stroke-width="1.4" opacity=".85"/>
    <path d="M157 80.4v-3.3h3.3M164.8 77.1h3.3v3.3M168.1 84.2v3.3h-3.3M160.3 87.5h-3.3v-3.3" fill="none" stroke="#fff" stroke-width="1.7"/>
    <circle cx="210.2" cy="77.2" r="1.8" fill="#fff"/><circle cx="210.2" cy="82.1" r="1.8" fill="#fff"/><circle cx="210.2" cy="87" r="1.8" fill="#fff"/>
    <rect x="19.8" y="106" width="198.2" height="4" rx="2" fill="#5c5c5c"/>
    <rect x="19.8" y="106" width="55" height="4" rx="2" fill="#fff"/>
  </svg><div class="t" style="left:52px;top:74.2px;font-family:'Liberation Serif',serif;font-size:15px;color:#fff">0:08</div></div>
<div class="card" style="left:899px;top:575px"><div class="vid"><svg class="img" width="224" height="126"><use href="#imgA"/></svg></div>
  <svg class="a" style="left:0;top:0" width="238" height="134" viewBox="0 0 238 134">
    <path d="M24.2 76.2 L33.6 82 L24.2 87.8Z" fill="#fff"/>
    <path d="M106.5 79.3h3l4.3-3.8v13.6l-4.3-3.8h-3z" fill="#8d8d8d" opacity=".85"/>
    <path d="M115.6 78.4a5.4 5.4 0 0 1 0 7.8M117.8 76.2a8.6 8.6 0 0 1 0 12.2" fill="none" stroke="#8d8d8d" stroke-width="1.4" opacity=".85"/>
    <path d="M157 80.4v-3.3h3.3M164.8 77.1h3.3v3.3M168.1 84.2v3.3h-3.3M160.3 87.5h-3.3v-3.3" fill="none" stroke="#fff" stroke-width="1.7"/>
    <circle cx="210.2" cy="77.2" r="1.8" fill="#fff"/><circle cx="210.2" cy="82.1" r="1.8" fill="#fff"/><circle cx="210.2" cy="87" r="1.8" fill="#fff"/>
    <rect x="19.8" y="106" width="198.2" height="4" rx="2" fill="#5c5c5c"/>
    <rect x="19.8" y="106" width="55" height="4" rx="2" fill="#fff"/>
  </svg><div class="t" style="left:52px;top:74.2px;font-family:'Liberation Serif',serif;font-size:15px;color:#fff">0:08</div></div>
<div class="card" style="left:1152px;top:575px"><div class="vid"><svg class="img" width="224" height="126"><use href="#imgB"/></svg></div>
  <svg class="a" style="left:0;top:0" width="238" height="134" viewBox="0 0 238 134">
    <path d="M24.2 76.2 L33.6 82 L24.2 87.8Z" fill="#fff"/>
    <path d="M106.5 79.3h3l4.3-3.8v13.6l-4.3-3.8h-3z" fill="#8d8d8d" opacity=".85"/>
    <path d="M115.6 78.4a5.4 5.4 0 0 1 0 7.8M117.8 76.2a8.6 8.6 0 0 1 0 12.2" fill="none" stroke="#8d8d8d" stroke-width="1.4" opacity=".85"/>
    <path d="M157 80.4v-3.3h3.3M164.8 77.1h3.3v3.3M168.1 84.2v3.3h-3.3M160.3 87.5h-3.3v-3.3" fill="none" stroke="#fff" stroke-width="1.7"/>
    <circle cx="210.2" cy="77.2" r="1.8" fill="#fff"/><circle cx="210.2" cy="82.1" r="1.8" fill="#fff"/><circle cx="210.2" cy="87" r="1.8" fill="#fff"/>
    <rect x="19.8" y="106" width="198.2" height="4" rx="2" fill="#5c5c5c"/>
    <rect x="19.8" y="106" width="16.5" height="4" rx="2" fill="#c9c9c9"/>
  </svg><div class="t" style="left:52px;top:74.2px;font-family:'Liberation Serif',serif;font-size:15px;color:#fff">0:00</div></div>
<div class="card" style="left:1405px;top:575px"><div class="vid"><svg class="img" width="224" height="126"><use href="#imgB"/></svg></div>
  <svg class="a" style="left:0;top:0" width="238" height="134" viewBox="0 0 238 134">
    <path d="M24.2 76.2 L33.6 82 L24.2 87.8Z" fill="#fff"/>
    <path d="M106.5 79.3h3l4.3-3.8v13.6l-4.3-3.8h-3z" fill="#8d8d8d" opacity=".85"/>
    <path d="M115.6 78.4a5.4 5.4 0 0 1 0 7.8M117.8 76.2a8.6 8.6 0 0 1 0 12.2" fill="none" stroke="#8d8d8d" stroke-width="1.4" opacity=".85"/>
    <path d="M157 80.4v-3.3h3.3M164.8 77.1h3.3v3.3M168.1 84.2v3.3h-3.3M160.3 87.5h-3.3v-3.3" fill="none" stroke="#fff" stroke-width="1.7"/>
    <circle cx="210.2" cy="77.2" r="1.8" fill="#fff"/><circle cx="210.2" cy="82.1" r="1.8" fill="#fff"/><circle cx="210.2" cy="87" r="1.8" fill="#fff"/>
    <rect x="19.8" y="106" width="198.2" height="4" rx="2" fill="#5c5c5c"/>
    <rect x="19.8" y="106" width="16.5" height="4" rx="2" fill="#c9c9c9"/>
  </svg></div>
<div class="card" style="left:1658px;top:575px"><div class="vid"><svg class="img" width="224" height="126"><use href="#imgB"/></svg></div>
  <svg class="a" style="left:0;top:0" width="238" height="134" viewBox="0 0 238 134">
    <path d="M24.2 76.2 L33.6 82 L24.2 87.8Z" fill="#fff"/>
    <path d="M106.5 79.3h3l4.3-3.8v13.6l-4.3-3.8h-3z" fill="#8d8d8d" opacity=".85"/>
    <path d="M115.6 78.4a5.4 5.4 0 0 1 0 7.8M117.8 76.2a8.6 8.6 0 0 1 0 12.2" fill="none" stroke="#8d8d8d" stroke-width="1.4" opacity=".85"/>
    <path d="M157 80.4v-3.3h3.3M164.8 77.1h3.3v3.3M168.1 84.2v3.3h-3.3M160.3 87.5h-3.3v-3.3" fill="none" stroke="#fff" stroke-width="1.7"/>
    <circle cx="210.2" cy="77.2" r="1.8" fill="#fff"/><circle cx="210.2" cy="82.1" r="1.8" fill="#fff"/><circle cx="210.2" cy="87" r="1.8" fill="#fff"/>
    <rect x="19.8" y="106" width="198.2" height="4" rx="2" fill="#5c5c5c"/>
    <rect x="19.8" y="106" width="16.5" height="4" rx="2" fill="#c9c9c9"/>
  </svg><div class="t" style="left:52px;top:74.2px;font-family:'Liberation Serif',serif;font-size:15px;color:#fff">0:00</div></div>
</div>

</body></html>
